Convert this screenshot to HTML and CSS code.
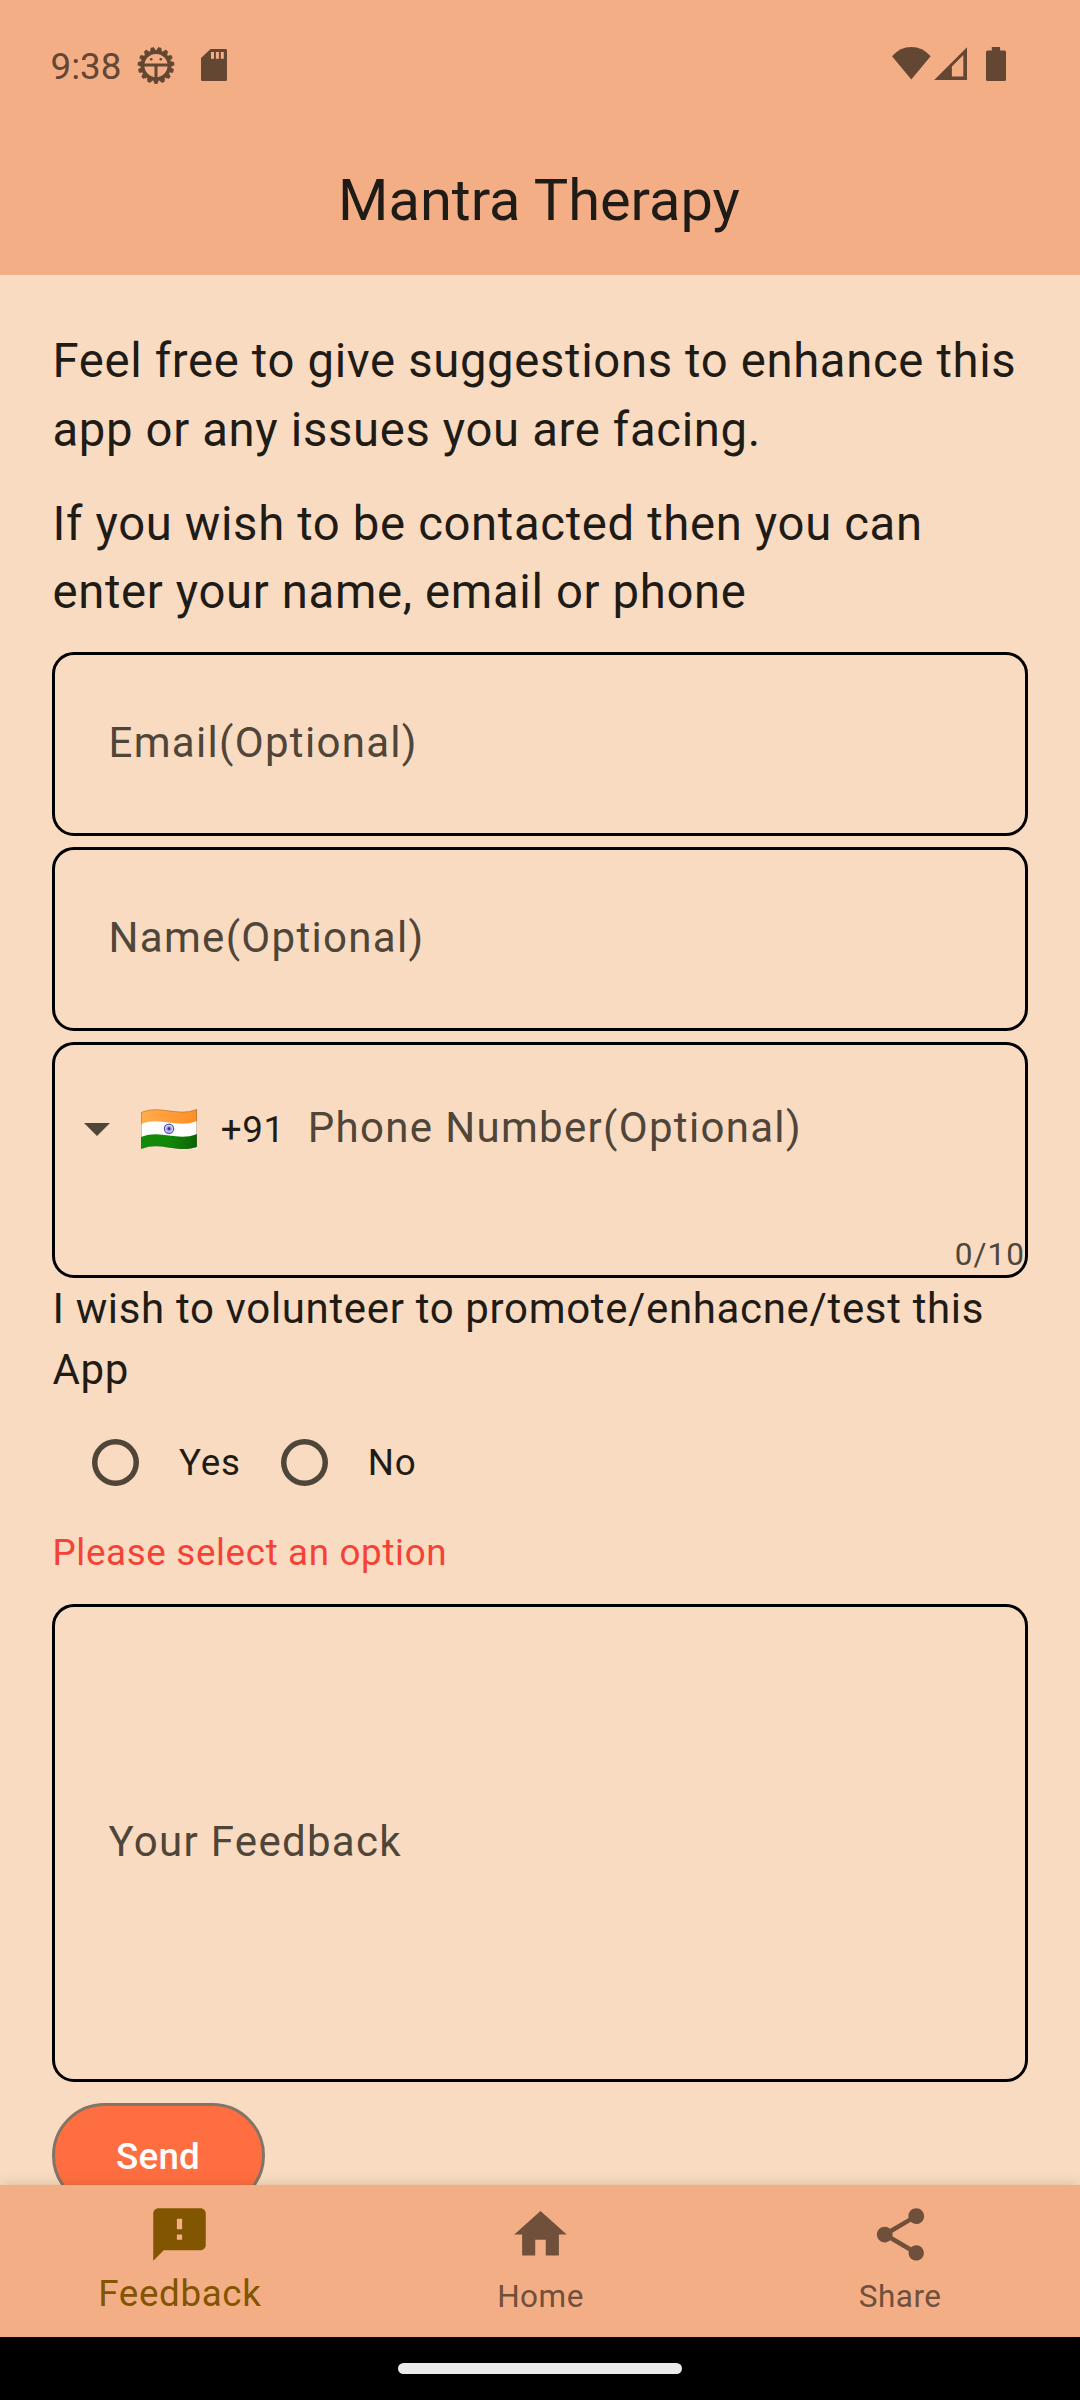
FILE: index.html
```html
<!DOCTYPE html>
<html lang="en">
<head>
<meta charset="utf-8">
<title>Mantra Therapy</title>
<link rel="stylesheet" href="styles.css">
</head>
<body>
<div class="screen">
  <header class="header">
    <div class="status">
      <span class="clock">9:38</span>
      <svg class="status-left" viewBox="137 46 90 38" fill="currentColor">
        <g fill="none" stroke="currentColor" transform="rotate(90 156 65.500)">
          <circle cx="156" cy="65.500" r="13.500" stroke-width="3.800"/>
          <circle cx="156" cy="65.500" r="15.800" stroke-width="2.400" pathLength="60" stroke-dasharray="2.900 1.100" stroke-dashoffset="1.450"/>
          <circle cx="156" cy="65.500" r="17.200" stroke-width="2.400" pathLength="60" stroke-dasharray="1.900 2.100" stroke-dashoffset=".95"/>
        </g>
        <path d="M143 63.400h26v3h-11.500v14h-3v-14H143z"/>
        <circle cx="151.200" cy="59.300" r="1.300"/>
        <circle cx="160.800" cy="59.300" r="1.300"/>
        <path fill-rule="evenodd" d="M210.600 49H225.500a1.500 1.500 0 0 1 1.500 1.500V79.500a1.500 1.500 0 0 1-1.500 1.500H202.500a1.500 1.500 0 0 1-1.500-1.500V58zM211 52v6.700h3V52zM215.900 52v6.700h3V52zM220.800 52v6.700h3V52z"/>
      </svg>
      <svg class="status-right" viewBox="892 47 114 34" fill="currentColor">
        <path d="M892 56.200Q900 47 911.300 47T930.600 56.200L911.300 79.600z"/>
        <path fill-rule="evenodd" d="M934.200 80L967 47.200V80zM951.900 66.500V76.600H963.300V55z"/>
        <path d="M991.800 47h8.300v3.500h4.400a1.500 1.500 0 0 1 1.500 1.500v27.500a1.500 1.500 0 0 1-1.500 1.500h-17a1.500 1.500 0 0 1-1.500-1.500V52a1.500 1.500 0 0 1 1.500-1.500h4.300z"/>
      </svg>
    </div>
    <h1 class="title">Mantra Therapy</h1>
  </header>

  <main class="content">
    <p class="intro">Feel free to give suggestions to enhance this app or any issues you are facing.</p>
    <p class="intro second">If you wish to be contacted then you can enter your name, email or phone</p>

    <div class="field">Email(Optional)</div>
    <div class="field">Name(Optional)</div>
    <div class="field phone">
      <div class="phone-row">
        <svg class="caret" viewBox="0 0 26 13"><path d="M0 0h26L13 13z" fill="currentColor"/></svg>
        <svg class="flag" viewBox="0 0 56 40">
          <defs>
            <linearGradient id="saffron"><stop offset="0" stop-color="#ffad4b"/><stop offset="1" stop-color="#ff8e26"/></linearGradient>
            <linearGradient id="green"><stop offset="0" stop-color="#128c0a"/><stop offset=".5" stop-color="#128807"/><stop offset="1" stop-color="#0a6304"/></linearGradient>
          </defs>
          <path d="M0 3C20-5 36 8 56 0V39C36 46 20 32 0 40z" fill="#fff"/>
          <path d="M0 3C20-5 36 8 56 0V12C36 20 20 7 0 15z" fill="url(#saffron)"/>
          <path d="M0 28C20 20 36 33 56 25V38C36 45 20 32 0 40z" fill="url(#green)"/>
          <path d="M.5 3.300C20-4.500 36 8.200 55.500.600V38C36 45 20 31.500.500 39.500z" fill="none" stroke="#6b5a38" stroke-opacity=".35"/>
          <circle cx="28" cy="19.800" r="4.600" fill="#dcdcf5" stroke="#5450b8" stroke-width="1.200"/>
          <circle cx="28" cy="19.800" r="2.600" fill="none" stroke="#8c89d4" stroke-width=".8"/>
          <circle cx="28" cy="19.800" r="1.700" fill="#3630a8"/>
        </svg>
        <span class="dial">+91</span>
        <span class="phone-hint">Phone Number(Optional)</span>
      </div>
      <span class="counter">0/10</span>
    </div>

    <p class="question">I wish to volunteer to promote/enhacne/test this App</p>
    <div class="options">
      <span class="radio"></span><span>Yes</span>
      <span class="radio"></span><span>No</span>
    </div>
    <p class="error">Please select an option</p>

    <div class="field feedback">Your Feedback</div>
    <button class="send" type="button">Send</button>
  </main>

  <nav class="nav">
    <a class="tab active">
      <svg viewBox="0 0 24 24" fill="currentColor"><path d="M20 2H4c-1.100 0-1.990.9-1.990 2L2 22l4-4h14c1.100 0 2-.9 2-2V4c0-1.100-.9-2-2-2zm-7 12h-2v-2h2v2zm0-4h-2V6h2v4z"/></svg>
      <span>Feedback</span>
    </a>
    <a class="tab">
      <svg viewBox="0 0 24 24" fill="currentColor"><path d="M10 20v-6h4v6h5v-8h3L12 3 2 12h3v8z"/></svg>
      <span>Home</span>
    </a>
    <a class="tab">
      <svg viewBox="0 0 24 24" fill="currentColor"><path d="M18 16.080c-.76 0-1.440.3-1.960.77L8.910 12.700c.05-.23.09-.46.09-.7s-.04-.47-.09-.7l7.050-4.110c.54.5 1.250.81 2.040.81 1.660 0 3-1.340 3-3s-1.340-3-3-3-3 1.340-3 3c0 .24.040.47.090.7L8.040 9.810C7.500 9.310 6.790 9 6 9c-1.660 0-3 1.340-3 3s1.340 3 3 3c.79 0 1.500-.31 2.040-.81l7.120 4.160c-.05.21-.08.43-.08.65 0 1.610 1.310 2.920 2.920 2.920 1.610 0 2.920-1.310 2.920-2.920s-1.310-2.920-2.920-2.920z"/></svg>
      <span>Share</span>
    </a>
  </nav>
  <div class="gesture"><div class="pill"></div></div>
</div>
</body>
</html>
```
FILE: styles.css
```css
* { box-sizing: border-box; }

body {
  margin: 0;
  font-family: Roboto, "Noto Sans", sans-serif;
  color: #1f1b16;
}

svg { display: block; flex: none; }
p, h1 { margin: 0; font-weight: 400; }

.screen {
  width: 1080px;
  height: 2400px;
  display: flex;
  flex-direction: column;
  overflow: hidden;
  background: #f9dbc1;
}

/* Header */
.header {
  flex: none;
  height: 275px;
  background: #f4ae86;
}
.status {
  display: flex;
  align-items: center;
  height: 130px;
  padding: 0 74px 0 50.5px;
  color: #634733;
}
.clock {
  width: 86.5px;
  padding-top: 3px;
  font-size: 36.75px;
  line-height: 43px;
}
.status-left { width: 90px; height: 38px; }
.status-right { width: 114px; height: 34px; margin: 0 0 2px auto; }
.title {
  padding: 36px 2px 0 0;
  font-size: 57.75px;
  line-height: 68px;
  text-align: center;
}

/* Form */
.content {
  flex: none;
  height: 1910px;
  padding: 52px 52px 0;
  overflow: hidden;
}
.intro {
  margin-bottom: 25px;
  padding-left: .5px;
  font-size: 47.25px;
  line-height: 69px;
  letter-spacing: .656px;
}
.intro.second {
  margin-bottom: 26px;
  line-height: 68px;
}

.field {
  display: flex;
  align-items: center;
  height: 184px;
  margin-bottom: 11px;
  padding: 0 53.5px 3px;
  border: 3px solid #000;
  border-radius: 22px;
  font-size: 42px;
  line-height: 49px;
  letter-spacing: 1.3125px;
  color: #4f4539;
}
.phone {
  flex-direction: column;
  align-items: stretch;
  height: 236px;
  margin-bottom: 0;
  padding: 0;
}
.phone-row {
  display: flex;
  align-items: center;
  height: 165px;
  padding-left: 29.3px;
}
.caret { width: 26px; height: 13px; margin-top: 4px; }
.flag { width: 56px; height: 40px; margin: 3px 23.7px 0 30.7px; }
.dial {
  padding-top: 4px;
  margin-right: 23px;
  font-size: 36.75px;
  line-height: 43px;
  letter-spacing: .656px;
  color: #1f1b16;
}
.counter {
  align-self: flex-end;
  margin-top: 26px;
  font-size: 31.5px;
  line-height: 37px;
  letter-spacing: 1.05px;
}

.question {
  padding-left: .5px;
  font-size: 42px;
  line-height: 61px;
  letter-spacing: .656px;
}
.options {
  display: flex;
  align-items: center;
  gap: 40px;
  height: 125px;
  padding-left: 40px;
  font-size: 36.75px;
  line-height: 43px;
  letter-spacing: .8px;
}
.radio {
  width: 47px;
  height: 47px;
  border-radius: 50%;
  box-shadow: inset 0 0 0 5.5px #4f4539;
}
.error {
  margin: 6px 0 30px;
  padding-left: .5px;
  font-size: 36.75px;
  line-height: 43px;
  letter-spacing: .656px;
  color: #f44336;
}
.feedback { height: 478px; margin-bottom: 21px; }

.send {
  display: block;
  width: 213px;
  height: 105px;
  padding: 1px 1px 0 0;
  border: 3px solid #817567;
  border-radius: 53px;
  background: #ff6e40;
  color: #fff;
  font: 500 36.75px/43px Roboto, "Noto Sans", sans-serif;
  letter-spacing: .26px;
}

/* Bottom navigation */
.nav {
  position: relative;
  flex: none;
  display: flex;
  height: 152px;
  background: #f4ae86;
  box-shadow: 0 0 12px rgba(80, 50, 20, .2);
}
.tab {
  flex: 1;
  display: flex;
  flex-direction: column;
  align-items: center;
  gap: 12px;
  padding-top: 18px;
  font-size: 31.5px;
  line-height: 37px;
  letter-spacing: .5px;
  color: #70503b;
}
.tab svg { width: 63px; height: 63px; }
.tab.active {
  gap: 6px;
  padding-right: 1px;
  font-size: 36.75px;
  line-height: 43px;
  letter-spacing: .656px;
  color: #825500;
}

.gesture {
  flex: 1;
  display: flex;
  justify-content: center;
  padding-top: 26px;
  background: #000;
}
.pill {
  width: 284px;
  height: 11px;
  border-radius: 5.5px;
  background: #ebebeb;
}
```
